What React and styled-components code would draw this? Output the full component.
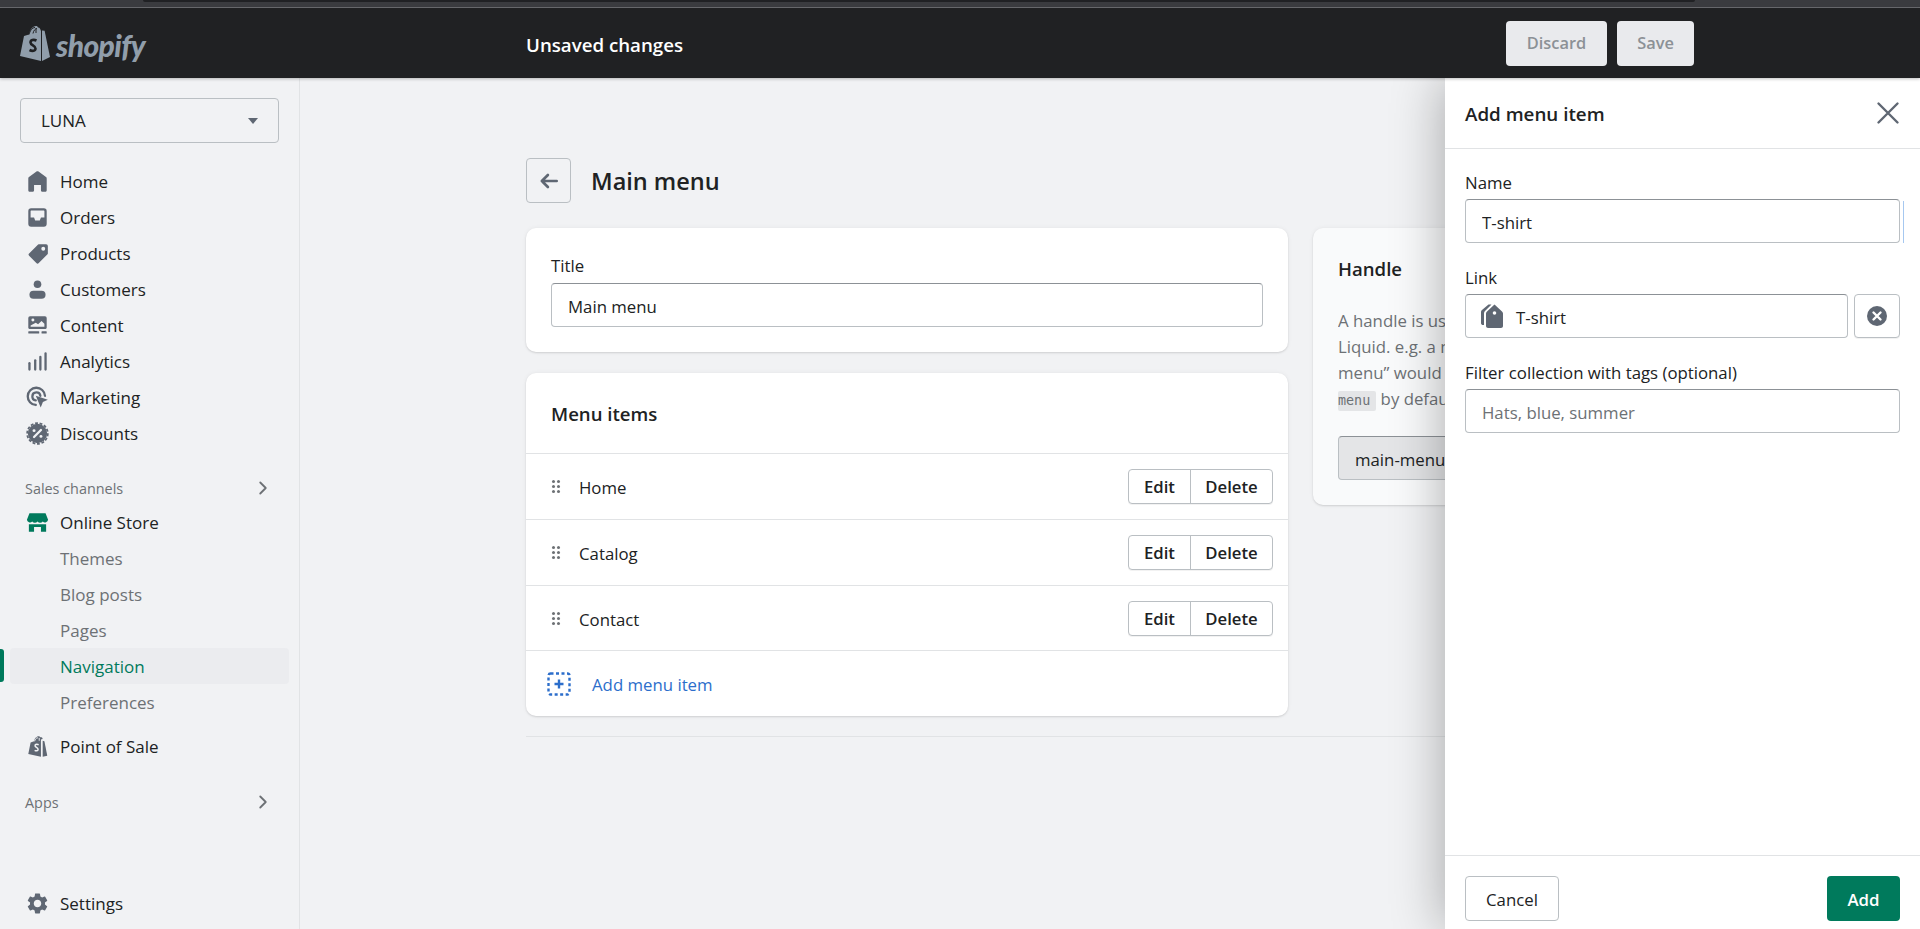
import React from 'react'
import styled, { createGlobalStyle } from 'styled-components'
import { ChevronRight } from 'lucide-react'
import { MdSettings } from 'react-icons/md'

const iconGrey = '#5f6773'

const GlobalStyle = createGlobalStyle`
html, body {
  margin: 0;
  padding: 0;
  height: 100%;
  overflow: hidden;
  background: #f1f2f4;
}
* { box-sizing: border-box; }
body {
  font-family: "Open Sans", "Noto Sans", Arial, sans-serif;
  font-size: 16.8px;
  color: #202223;
}
`

const Page = styled.div`
position: relative;
width: 1920px;
height: 929px;
overflow: hidden;
display: flex;
flex-direction: column;
`

const BrowserStrip = styled.div`
height: 8px;
flex: none;
background: #3a3b3f;
border-bottom: 1px solid #6b6c70;
`

const BrowserTab = styled.div`
height: 2px;
margin: 0 225px 0 143px;
background: #202124;
border-radius: 0 0 6px 6px;
`

const TopBar = styled.header`
height: 70px;
flex: none;
display: flex;
align-items: center;
background: #202123;
padding-left: 20px;
position: relative;
z-index: 3;
box-shadow: 0 1px 3px rgba(0, 0, 0, .25);
`

const LogoWrap = styled.div`
width: 506px;
display: flex;
align-items: center;
gap: 6px;
`

const LogoWord = styled.span`
font-family: Lato, sans-serif;
font-style: italic;
font-weight: 900;
font-size: 30px;
letter-spacing: -.6px;
line-height: 1;
color: #919eab;
margin-top: 4px;
`

const BarTitle = styled.div`
padding-top: 2px;
font-size: 18.7px;
font-weight: 600;
color: #fff;
`

const BarActions = styled.div`
margin-left: auto;
margin-right: 226px;
display: flex;
gap: 10px;
`

const BarButton = styled.button`
height: 45px;
width: ${p => p.$w}px;
padding: 0 0 2px;
border: 0;
border-radius: 4px;
background: #e9eaed;
color: #8c9196;
font: 600 16.4px "Open Sans", sans-serif;
`

const Body = styled.div`
flex: 1;
display: flex;
min-height: 0;
`

const Sidebar = styled.aside`
width: 300px;
flex: none;
display: flex;
flex-direction: column;
padding: 20px 0 8px;
background: #f1f2f4;
border-right: 1px solid #e1e3e5;
`

const StoreSelect = styled.div`
height: 45px;
margin: 0 20px 20px;
padding: 0 20px;
display: flex;
align-items: center;
justify-content: space-between;
border: 1px solid #babfc3;
border-radius: 4px;
font-size: 17px;
`

const Caret = styled.span`
width: 0;
height: 0;
border-left: 5px solid transparent;
border-right: 5px solid transparent;
border-top: 6px solid ${iconGrey};
`

const NavRow = styled.div`
position: relative;
height: ${p => p.$h || 36}px;
margin: ${p => (p.$bottom ? 'auto' : `${p.$top || 0}px`)} 10px 0;
padding-left: ${p => (p.$sub ? 50 : 16)}px;
display: flex;
align-items: center;
gap: 11px;
border-radius: 4px;
font-size: 17px;
color: ${p => (p.$active ? '#007a5c' : p.$sub ? '#6d7175' : '#202223')};
background: ${p => (p.$active ? '#ebecef' : 'transparent')};
${p => p.$active && `
  &::before {
    content: '';
    position: absolute;
    left: -10px;
    top: 1px;
    bottom: 2px;
    width: 4px;
    border-radius: 0 3px 3px 0;
    background: #007a5c;
  }
`}
`

const NavHeading = styled.div`
height: 36px;
margin: ${p => p.$top}px 25px -1px 25px;
display: flex;
align-items: center;
justify-content: space-between;
font-size: 14.4px;
color: #6d7175;
`

const NavIconSvg = styled.svg`
flex: none;
`

const Gear = styled(MdSettings)`
flex: none;
margin: 0 -1px;
`

const Main = styled.main`
flex: 1;
padding: 80px 0 0 226px;
background: #f1f2f4;
`

const Content = styled.div`
width: 1174px;
`

const PageHeader = styled.div`
display: flex;
align-items: center;
gap: 20px;
height: 45px;
margin-bottom: 25px;
`

const BackButton = styled.button`
width: 45px;
height: 45px;
padding: 0;
display: flex;
align-items: center;
justify-content: center;
background: transparent;
border: 1px solid #babfc3;
border-radius: 4px;
`

const PageTitle = styled.h1`
margin: 0;
font-size: 23.5px;
font-weight: 600;
`

const Columns = styled.div`
display: grid;
grid-template-columns: 762px 387px;
gap: 25px;
align-items: start;
`

const Stack = styled.div`
display: flex;
flex-direction: column;
gap: 21px;
`

const Card = styled.section`
background: ${p => (p.$muted ? '#f9fafb' : '#fff')};
border-radius: 10px;
padding: ${p => (p.$flush ? 0 : '25px')};
box-shadow: 0 0 5px rgba(23, 24, 24, .05), 0 1px 2px rgba(0, 0, 0, .12);
overflow: hidden;
`

const FieldLabel = styled.label`
display: block;
height: ${p => p.$h || 25}px;
line-height: 25px;
margin-bottom: 4px;
color: #202223;
`

const TextInput = styled.input`
display: block;
width: 100%;
height: 44px;
padding: 2px 16px 0;
background: #fff;
border: 1px solid #babfc3;
border-top-color: #8c9196;
border-radius: 4px;
font: 16.8px "Open Sans", sans-serif;
color: #202223;
outline: none;
&::placeholder { color: #6d7175; opacity: 1; }
`

const CardHeading = styled.div`
height: 80px;
padding-left: 25px;
display: flex;
align-items: center;
font-size: 18.6px;
font-weight: 600;
`

const MenuRow = styled.div`
height: ${p => p.$h || 66}px;
display: flex;
align-items: center;
padding: 0 15px 0 26px;
border-top: 1px solid #e1e3e5;
`

const Grip = styled.span`
display: grid;
grid-template-columns: 3px 3px;
gap: 2px;
margin-right: 19px;
i {
  width: 3px;
  height: 3px;
  border-radius: 50%;
  background: #6d7175;
}
`

const MenuLabel = styled.span`
padding-top: 2px;
`

const ButtonGroup = styled.div`
margin-left: auto;
display: flex;
height: 35px;
background: #fff;
border: 1px solid #babfc3;
border-radius: 4px;
box-shadow: 0 1px 0 rgba(0, 0, 0, .05);
`

const GroupButton = styled.button`
width: ${p => p.$w}px;
padding: 0;
border: 0;
background: transparent;
font: 600 16.7px "Open Sans", sans-serif;
color: #202223;
& + & { border-left: 1px solid #babfc3; }
`

const AddIcon = styled.svg`
flex: none;
margin-left: -5px;
`

const AddLink = styled.a`
margin-left: 21px;
padding-top: 2px;
color: #2c6ecb;
`

const HandleTitle = styled.div`
height: 32px;
line-height: 32px;
font-size: 18.6px;
font-weight: 600;
margin-bottom: 23px;
`

const HandleText = styled.p`
margin: 0 0 22px;
width: 345px;
line-height: 26px;
color: #6d7175;
white-space: nowrap;
overflow: hidden;
`

const Code = styled.code`
font-family: "DejaVu Sans Mono", monospace;
font-size: 13.4px;
padding: 2px 6px 3px 0;
background: #e4e5e7;
border-radius: 2px;
`

const HandleInput = styled(TextInput)`
background: #e4e5e7;
`

const Rule = styled.div`
height: 1px;
margin-top: 20px;
background: #e1e3e5;
`

const Drawer = styled.aside`
position: absolute;
top: 78px;
right: 0;
bottom: 0;
width: 475px;
z-index: 2;
display: flex;
flex-direction: column;
background: #fff;
box-shadow: 0 0 50px rgba(0, 0, 0, .32);
`

const DrawerHeader = styled.div`
height: 71px;
flex: none;
padding: 0 20px 0 20px;
display: flex;
align-items: center;
justify-content: space-between;
border-bottom: 1px solid #e1e3e5;
`

const DrawerTitle = styled.h2`
margin: 0;
padding-top: 2px;
font-size: 18.8px;
font-weight: 600;
`

const DrawerBody = styled.div`
flex: 1;
padding: 21px 20px 0;
display: flex;
flex-direction: column;
gap: 22px;
`

const NameField = styled.div`
position: relative;
&::after {
  content: '';
  position: absolute;
  right: -4px;
  bottom: 0;
  width: 1px;
  height: 42px;
  background: #a6c8f0;
}
`

const LinkRow = styled.div`
display: flex;
gap: 6px;
`

const LinkBox = styled.div`
flex: 1;
height: 44px;
padding: 2px 0 0 13px;
display: flex;
align-items: center;
gap: 11px;
border: 1px solid #babfc3;
border-top-color: #8c9196;
border-radius: 4px;
`

const TagIcon = styled.svg`
flex: none;
margin-top: -2px;
`

const BagMark = styled.svg`
flex: none;
`

const ClearButton = styled.button`
width: 46px;
height: 44px;
padding: 0;
display: flex;
align-items: center;
justify-content: center;
background: #fff;
border: 1px solid #babfc3;
border-radius: 4px;
box-shadow: 0 1px 0 rgba(0, 0, 0, .05);
`

const DrawerFooter = styled.div`
height: 74px;
flex: none;
padding: 20px 20px 0 20px;
display: flex;
justify-content: space-between;
align-items: flex-start;
border-top: 1px solid #e1e3e5;
`

const FooterButton = styled.button`
width: ${p => p.$w}px;
height: 45px;
padding: 2px 0 0;
border-radius: 4px;
font: ${p => (p.$primary ? 600 : 500)} 16.8px "Open Sans", sans-serif;
color: ${p => (p.$primary ? '#fff' : '#202223')};
background: ${p => (p.$primary ? '#007a5c' : '#fff')};
border: ${p => (p.$primary ? '0' : '1px solid #babfc3')};
`

const Icon = ({ children, color = iconGrey }) => (
  <NavIconSvg width={23} height={23} viewBox="0 0 20 20" fill={color}>
    {children}
  </NavIconSvg>
)

const icons = {
  home: <path d="M18 7.300v10.200c0 .8-.7 1.500-1.500 1.500h-2c-.8 0-1.500-.7-1.500-1.500V13H7v4.500C7 18.300 6.300 19 5.500 19h-2C2.700 19 2 18.300 2 17.500V7.300c0-.5.200-.9.600-1.200l6.500-4.800c.5-.4 1.300-.4 1.800 0l6.500 4.800c.4.300.600.700.600 1.200z" />,
  orders: <path fillRule="evenodd" d="M2 4.500A2.500 2.500 0 0 1 4.500 2h11A2.500 2.500 0 0 1 18 4.500v11a2.500 2.500 0 0 1-2.500 2.500h-11A2.500 2.500 0 0 1 2 15.500v-11zM4.500 4a.5.5 0 0 0-.5.5V10h3l1 2.500h4l1-2.500h3V4.500a.5.5 0 0 0-.5-.5h-11z" />,
  products: <path fillRule="evenodd" d="M11 2h6.500A1.500 1.500 0 0 1 19 3.500V10a1 1 0 0 1-.3.7l-7.600 7.600a1.500 1.500 0 0 1-2.100 0l-6.300-6.300a1.500 1.500 0 0 1 0-2.100l7.600-7.600A1 1 0 0 1 11 2zm4 5.500a1.700 1.700 0 1 0 0-3.400 1.700 1.700 0 0 0 0 3.400z" />,
  customers: (
    <>
      <circle cx="10" cy="5.500" r="3.300" />
      <rect x="3" y="11" width="14" height="7" rx="3.500" />
    </>
  ),
  content: (
    <>
      <path fillRule="evenodd" d="M3.500 2h13A1.500 1.500 0 0 1 18 3.500V12a1 1 0 0 1-1 1H3a1 1 0 0 1-1-1V3.500A1.500 1.500 0 0 1 3.500 2zM6 6.500a1.300 1.300 0 1 0 0-2.600 1.300 1.300 0 0 0 0 2.600zM4 11h12V8.500l-2.500-2.500-3 3-2-1.500L4 10z" />
      <rect x="2" y="15" width="9.500" height="2" rx=".5" />
      <rect x="13.500" y="15" width="4.500" height="2" rx=".5" />
    </>
  ),
  analytics: (
    <>
      <rect x="2" y="10.500" width="2" height="7.500" rx="1" />
      <rect x="7" y="8" width="2" height="10" rx="1" />
      <rect x="11.500" y="5" width="2" height="13" rx="1" />
      <rect x="16" y="2" width="2" height="16" rx="1" />
    </>
  ),
  marketing: (
    <>
      <path d="M8.500 16.500A7.500 7.500 0 1 1 16.500 8.500M8.500 12.500A3.500 3.500 0 1 1 12.500 8.500" fill="none" stroke={iconGrey} strokeWidth="2" strokeLinecap="round" />
      <path d="M8.500 8.500L19 12l-4.300 2-1.900 4.800z" />
    </>
  ),
  discounts: (
    <>
      <circle cx="10" cy="10" r="8.400" />
      <circle cx="10" cy="10" r="9" fill="none" stroke={iconGrey} strokeWidth="1.500" strokeDasharray="2.500 1.500" />
      <path d="M7 13l6-6" stroke="#f1f2f4" strokeWidth="2" strokeLinecap="round" />
      <circle cx="7" cy="7.500" r="1.300" fill="#f1f2f4" />
      <circle cx="13" cy="12.500" r="1.300" fill="#f1f2f4" />
    </>
  ),
  store: (
    <>
      <path d="M3 2h14l2.200 5.500a2.700 2.700 0 0 1-4.600 1.600 3.100 3.100 0 0 1-4.600 0 3.100 3.100 0 0 1-4.600 0A2.700 2.700 0 0 1 .8 7.500z" />
      <path d="M2.500 11.500h15V18H13v-4H7v4H2.500z" />
    </>
  ),
  pos: (
    <>
      <path d="M2 16.500L4 6.500l3-1c.3-2.500 2-4.500 4-4.500.7 0 1.200.4 1.500 1h1c.500 0 .800.800 1 1.500l-1.500.5v15L2 16.500z" />
      <path d="M14.500 5l1.500.5 2.500 12.500-4 1z" />
      <path d="M11 8.500c-2-1-3.500 0-3 1.300.4 1 2.500 1.200 2.500 2.700 0 1.200-1.500 1.600-3 .8" fill="none" stroke="#f1f2f4" strokeWidth="1.300" />
      <path d="M7.500 5.500C7.700 4 9 2 10.500 2.500M11.500 5V2.500" fill="none" stroke="#f1f2f4" strokeWidth=".8" />
    </>
  ),
}

const ShopifyBag = () => (
  <BagMark width="30" height="36" viewBox="0 0 30 36">
    <path d="M0 31L4 11l5-1.600C10 5 12.500 1 16 1c1.200 0 1.800.7 2 1.500 1.500-.2 2.500 1.500 3 3.500v30z" fill="#919eab" />
    <path d="M22 5.500l2.600.3L30 32l-8 4z" fill="#919eab" />
    <path d="M9 9.500C10 6 12 2.500 15 2.500M13 8.500C13.500 6 15 3.500 17 3.500M16 8V3.500" fill="none" stroke="#202123" strokeWidth="1" />
    <path d="M16.500 15.500c-3-1.300-6-.5-6 2 0 2.800 5 3 5 6 0 2.500-3.200 3-6 1.500" fill="none" stroke="#202123" strokeWidth="2.600" />
  </BagMark>
)

const navTop = [
  ['home', 'Home'],
  ['orders', 'Orders'],
  ['products', 'Products'],
  ['customers', 'Customers'],
  ['content', 'Content'],
  ['analytics', 'Analytics'],
  ['marketing', 'Marketing'],
  ['discounts', 'Discounts'],
]

const storeLinks = ['Themes', 'Blog posts', 'Pages', 'Navigation', 'Preferences']
const menuItems = [['Home', 66], ['Catalog', 66], ['Contact', 65]]

export default function App() {
  return (
    <Page>
      <GlobalStyle />
      <BrowserStrip>
        <BrowserTab />
      </BrowserStrip>
      <TopBar>
        <LogoWrap>
          <ShopifyBag />
          <LogoWord>shopify</LogoWord>
        </LogoWrap>
        <BarTitle>Unsaved changes</BarTitle>
        <BarActions>
          <BarButton $w={101}>Discard</BarButton>
          <BarButton $w={77}>Save</BarButton>
        </BarActions>
      </TopBar>

      <Body>
        <Sidebar>
          <StoreSelect>
            LUNA
            <Caret />
          </StoreSelect>
          {navTop.map(([icon, label]) => (
            <NavRow key={label}>
              <Icon>{icons[icon]}</Icon>
              {label}
            </NavRow>
          ))}
          <NavHeading $top={19}>
            Sales channels
            <ChevronRight size={22} color="#6d7175" />
          </NavHeading>
          <NavRow $h={35}>
            <Icon color="#007a5c">{icons.store}</Icon>
            Online Store
          </NavRow>
          {storeLinks.map(label => (
            <NavRow key={label} $sub $active={label === 'Navigation'}>
              {label}
            </NavRow>
          ))}
          <NavRow $top={8}>
            <Icon>{icons.pos}</Icon>
            Point of Sale
          </NavRow>
          <NavHeading $top={20}>
            Apps
            <ChevronRight size={22} color="#6d7175" />
          </NavHeading>
          <NavRow $bottom>
            <Gear size={25} color={iconGrey} />
            Settings
          </NavRow>
        </Sidebar>

        <Main>
          <Content>
            <PageHeader>
              <BackButton aria-label="Back">
                <svg width="22" height="22" viewBox="0 0 20 20" fill="none" stroke={iconGrey} strokeWidth="2.400" strokeLinecap="round" strokeLinejoin="round">
                  <path d="M17 10H3.500M9 4.500L3.500 10 9 15.500" />
                </svg>
              </BackButton>
              <PageTitle>Main menu</PageTitle>
            </PageHeader>

            <Columns>
              <Stack>
                <Card>
                  <FieldLabel $h={26}>Title</FieldLabel>
                  <TextInput defaultValue="Main menu" />
                </Card>
                <Card $flush>
                  <CardHeading>Menu items</CardHeading>
                  {menuItems.map(([item, h]) => (
                    <MenuRow key={item} $h={h}>
                      <Grip>
                        <i /><i /><i /><i /><i /><i />
                      </Grip>
                      <MenuLabel>{item}</MenuLabel>
                      <ButtonGroup>
                        <GroupButton $w={61}>Edit</GroupButton>
                        <GroupButton $w={82}>Delete</GroupButton>
                      </ButtonGroup>
                    </MenuRow>
                  ))}
                  <MenuRow>
                    <AddIcon width="24" height="24" viewBox="0 0 24 24" fill="none" stroke="#2c6ecb">
                      <rect x="1.500" y="1.500" width="21" height="21" rx="2" strokeWidth="2.400" strokeDasharray="3 2.500" />
                      <path d="M12 7.500v9M7.500 12h9" strokeWidth="2.400" />
                    </AddIcon>
                    <AddLink>Add menu item</AddLink>
                  </MenuRow>
                </Card>
              </Stack>

              <Card $muted>
                <HandleTitle>Handle</HandleTitle>
                <HandleText>
                  A handle is used to reference a menu in
                  <br />
                  Liquid. e.g. a menu with the title “Sidebar
                  <br />
                  menu” would have the handle sidebar-
                  <br />
                  <Code>menu</Code> by default.
                </HandleText>
                <HandleInput defaultValue="main-menu" />
              </Card>
            </Columns>
            <Rule />
          </Content>
        </Main>
      </Body>

      <Drawer>
        <DrawerHeader>
          <DrawerTitle>Add menu item</DrawerTitle>
          <svg width="24" height="24" viewBox="0 0 24 24" fill="none" stroke={iconGrey} strokeWidth="2.400" strokeLinecap="round">
            <path d="M2.500 2.500l19 19M21.500 2.500l-19 19" />
          </svg>
        </DrawerHeader>
        <DrawerBody>
          <NameField>
            <FieldLabel>Name</FieldLabel>
            <TextInput defaultValue="T-shirt" />
          </NameField>
          <div>
            <FieldLabel>Link</FieldLabel>
            <LinkRow>
              <LinkBox>
                <TagIcon width="26" height="26" viewBox="0 0 26 26" fill={iconGrey}>
                  <path fillRule="evenodd" d="M15.500 1.500L23 8.500c.6.5 1 1.200 1 2V23c0 1-.8 2-2 2H9c-1 0-2-1-2-2V10.500c0-.8.300-1.500 1-2zM17.300 10a1.800 1.800 0 1 0-3.600 0 1.800 1.800 0 0 0 3.600 0z" />
                  <path d="M9.500 1.500h3L6 8c-.6.600-1 1.400-1 2.300V22H4c-1 0-2-.8-2-1.800V9c0-.7.300-1.300.7-1.800z" />
                </TagIcon>
                T-shirt
              </LinkBox>
              <ClearButton aria-label="Clear">
                <svg width="22" height="22" viewBox="0 0 22 22">
                  <circle cx="11" cy="11" r="10" fill={iconGrey} />
                  <path d="M7.500 7.500l7 7M14.500 7.500l-7 7" stroke="#fff" strokeWidth="2.400" strokeLinecap="round" />
                </svg>
              </ClearButton>
            </LinkRow>
          </div>
          <div>
            <FieldLabel>Filter collection with tags (optional)</FieldLabel>
            <TextInput placeholder="Hats, blue, summer" />
          </div>
        </DrawerBody>
        <DrawerFooter>
          <FooterButton $w={94}>Cancel</FooterButton>
          <FooterButton $w={73} $primary>Add</FooterButton>
        </DrawerFooter>
      </Drawer>
    </Page>
  )
}
